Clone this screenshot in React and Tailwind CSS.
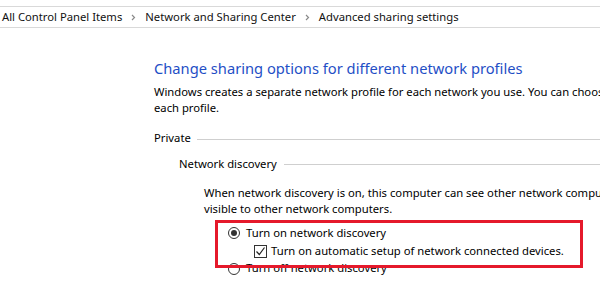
export default function App() {
  const crumbs = ['All Control Panel Items', 'Network and Sharing Center', 'Advanced sharing settings'];

  return (
    <div className="w-[600px] h-[289px] overflow-hidden bg-white text-black font-['Noto_Sans',sans-serif] text-[11.25px]">
      {/* breadcrumb */}
      <div className="mt-[6px] h-[22px] border-y border-[#d9d9d9] flex items-center pl-[2px] whitespace-nowrap text-[#111]">
        {crumbs.map((c, i) => (
          <span key={c} className="flex items-center">
            {i > 0 && (
              <svg className="mx-[9px]" width="5" height="7" viewBox="0 0 5 7">
                <path d="M1 1l2.5 2.5L1 6" fill="none" stroke="#8a8a8a" strokeWidth="1.2" />
              </svg>
            )}
            {c}
          </span>
        ))}
      </div>

      <div className="pl-[154px] whitespace-nowrap">
        <h1 className="mt-[30px] text-[14.7px] leading-[20px] text-[#1f4fc6]">
          Change sharing options for different network profiles
        </h1>
        <p className="mt-[6px] leading-[16px]">
          Windows creates a separate network profile for each network you use. You can choose a specific options for
          <br />
          each profile.
        </p>

        <div className="mt-[14px] h-[16px] flex items-center">
          <span>Private</span>
          <div className="ml-[6px] flex-1 h-px bg-[#cfcfcf] mt-[3px]" />
        </div>

        <div className="mt-[10px] h-[16px] pl-[25px] flex items-center">
          <span>Network discovery</span>
          <div className="ml-[7px] flex-1 h-px bg-[#cfcfcf]" />
        </div>

        <p className="mt-[13px] pl-[50px] leading-[16px]">
          When network discovery is on, this computer can see other network computers and devices and is
          <br />
          visible to other network computers.
        </p>

        <div className="relative mt-[8px] ml-[74px]">
          <div className="h-[16px] flex items-center">
            <span className="w-[12px] h-[12px] rounded-full border border-[#333] flex items-center justify-center">
              <span className="w-[6px] h-[6px] rounded-full bg-[#333]" />
            </span>
            <span className="ml-[6px]">Turn on network discovery</span>
          </div>
          <div className="mt-[2px] h-[17px] pl-[26px] flex items-center">
            <span className="w-[13px] h-[13px] border border-[#333] flex items-center justify-center">
              <svg width="11" height="11" viewBox="0 0 11 11">
                <path d="M1.5 5.5l2.8 3L9.5 1.5" fill="none" stroke="#222" strokeWidth="1.2" />
              </svg>
            </span>
            <span className="ml-[4px]">Turn on automatic setup of network connected devices.</span>
          </div>
          <div className="h-[17px] flex items-center">
            <span className="w-[12px] h-[12px] rounded-full border border-[#333]" />
            <span className="ml-[6px]">Turn off network discovery</span>
          </div>

          <div className="absolute left-[-13px] top-[-5px] w-[368px] h-[48px] border-[3px] border-[#e5192b]" />
        </div>
      </div>
    </div>
  );
}
